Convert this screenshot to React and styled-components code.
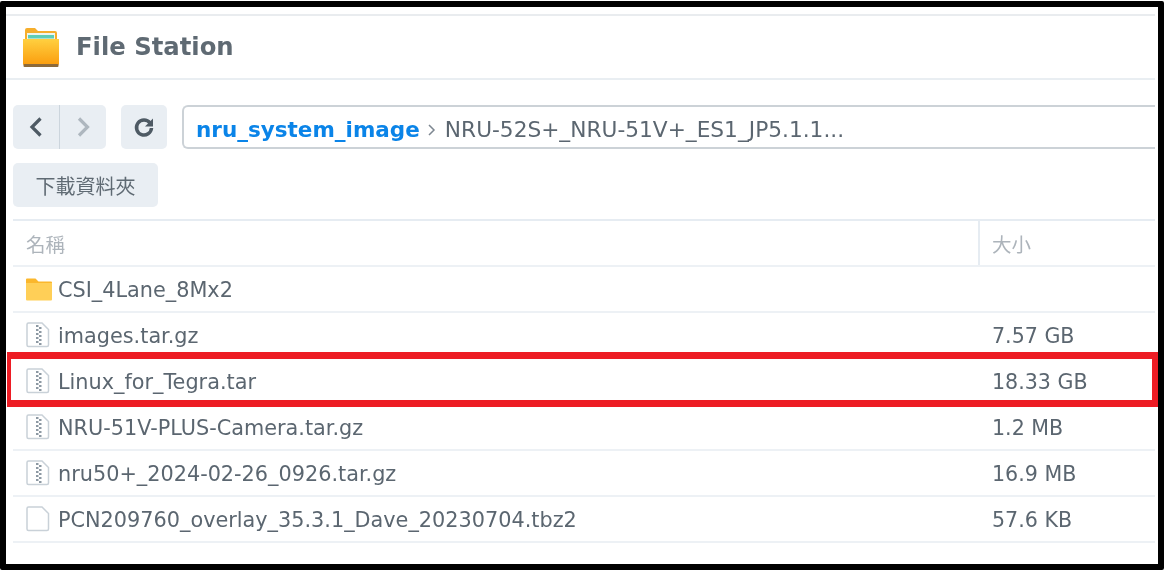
import React from 'react';
import styled, { createGlobalStyle } from 'styled-components';

const GlobalStyle = createGlobalStyle`
	html, body { margin: 0; padding: 0; background: #fff; }
	* { box-sizing: border-box; }
`

const Frame = styled.div`
	position: relative;
	width: 1164px;
	height: 569px;
	margin: 1px 0 0 0;
	border: 6px solid #000;
	border-radius: 2px;
	background: #fff;
	padding: 7px 3px 0 0;
	font-family: "DejaVu Sans", "Noto Sans CJK TC", sans-serif;
	color: #5b6670;
	filter: blur(0.4px);
`

const Header = styled.div`
	display: flex;
	align-items: center;
	height: 66px;
	border-top: 2px solid #e9ecef;
	border-bottom: 2px solid #e9eef2;
	padding-left: 17px;
	gap: 17px;
`

const Title = styled.div`
	font-size: 24.300px;
	font-weight: 700;
	color: #5f6a73;
	margin-bottom: 2px;
`

const Body = styled.div`
	padding: 25px 0 0 7px;
`

const Toolbar = styled.div`
	display: flex;
	gap: 15px;
`

const ButtonGroup = styled.div`
	display: flex;
	height: 44px;
	border-radius: 5px;
	background: #e9eef3;
`

const NavButton = styled.div`
	width: ${props => props.$wide}px;
	display: flex;
	align-items: center;
	justify-content: center;
	& + & {
		border-left: 1px solid #ccd5dd;
	}
`

const PathBar = styled.div`
	flex: 1;
	height: 44px;
	display: flex;
	align-items: center;
	border: 2px solid #ccd2d7;
	border-right: none;
	border-radius: 6px 0 0 6px;
	padding: 5px 0 0 12px;
	font-size: 21.700px;
`

const PathRoot = styled.span`
	font-size: 21.500px;
	font-weight: 700;
	color: #0a84e8;
`

const PathChevron = styled.svg`
	margin: 0 8px 0 7px;
`

const PathRest = styled.span`
	color: #5b6670;
`

const ActionButton = styled.div`
	display: flex;
	align-items: center;
	justify-content: center;
	width: 145px;
	height: 44px;
	margin-top: 14px;
	border-radius: 5px;
	background: #e9eef3;
	font-size: 20px;
	color: #5f6a73;
`

const Table = styled.div`
	margin-top: 12px;
	border-top: 2px solid #e6ecf2;
`

const Row = styled.div`
	display: flex;
	align-items: center;
	height: 46px;
	border-bottom: 2px solid #edf1f5;
`

const NameCell = styled.div`
	flex: 1;
	height: 100%;
	display: flex;
	align-items: center;
	padding-left: 13px;
	font-size: 20.800px;
	white-space: nowrap;
`

const IconSlot = styled.div`
	display: flex;
	width: 32px;
	flex-shrink: 0;
`

const CellText = styled.span`
	padding-top: 2px;
`

const SizeCell = styled.div`
	width: 177px;
	height: 100%;
	display: flex;
	align-items: center;
	padding-left: 12px;
	font-size: 20.600px;
	border-left: ${props => props.$head ? '2px solid #e6ecf2' : '2px solid transparent'};
`

const HeadLabel = styled.span`
	font-size: 19.500px;
	color: #adb4bb;
`

const Highlight = styled.div`
	position: absolute;
	left: 1px;
	right: 0;
	top: 345px;
	height: 55px;
	border: 7px solid #ed1c24;
	border-left-width: 4px;
	border-right-width: 6px;
`

const files = [
	{ name: 'CSI_4Lane_8Mx2', size: '', type: 'folder' },
	{ name: 'images.tar.gz', size: '7.57 GB', type: 'zip' },
	{ name: 'Linux_for_Tegra.tar', size: '18.33 GB', type: 'zip' },
	{ name: 'NRU-51V-PLUS-Camera.tar.gz', size: '1.2 MB', type: 'zip' },
	{ name: 'nru50+_2024-02-26_0926.tar.gz', size: '16.9 MB', type: 'zip' },
	{ name: 'PCN209760_overlay_35.3.1_Dave_20230704.tbz2', size: '57.6 KB', type: 'file' }
];

const AppIcon = () => (
	<svg width="36" height="40" viewBox="0 0 36 40">
		<defs>
			<linearGradient id="fold" x1="0" y1="0" x2="0" y2="1">
				<stop offset="0" stopColor="#ffd040" />
				<stop offset="1" stopColor="#fb9d0e" />
			</linearGradient>
		</defs>
		<path d="M2 3a2 2 0 0 1 2-2h8l3 3h17a2 2 0 0 1 2 2v10H2z" fill="#f6ae2c" />
		<rect x="4" y="6" width="28" height="8" fill="#eef5ee" />
		<rect x="5" y="8" width="26" height="3.500" fill="#5fcdb6" />
		<path d="M0 12h36v25a1 1 0 0 1-1 1H1a1 1 0 0 1-1-1z" fill="url(#fold)" />
		<rect x="0.500" y="37" width="35" height="3" rx="1" fill="#8d6a3a" />
	</svg>
);

const FolderIcon = () => (
	<svg width="26" height="24" viewBox="0 0 26 24">
		<path d="M0 2.500a1 1 0 0 1 1-1h8.500l3 3H25a1 1 0 0 1 1 1V6H0z" fill="#fbb72c" />
		<path d="M0 6h26v16.500a1 1 0 0 1-1 1H1a1 1 0 0 1-1-1z" fill="#ffcf57" />
	</svg>
);

// zipper teeth run down the middle of the sheet
const teeth = [3, 7, 11, 15, 19];

const FileIcon = ({ zip }) => (
	<svg width="24" height="26" viewBox="0 0 24 26" fill="none">
		<path d="M2.500 1h13.500l6.500 6.500V23a1.500 1.500 0 0 1-1.500 1.500H2.500A1.500 1.500 0 0 1 1 23V2.500A1.500 1.500 0 0 1 2.500 1z" fill="#fff" stroke="#c9d1d8" strokeWidth="1.500" />
		{zip && teeth.map(y => (
			<g key={y} fill="#8d99a3">
				<rect x="10" y={y} width="2.500" height="2" />
				<rect x="13" y={y + 2} width="2.500" height="2" />
			</g>
		))}
	</svg>
);

const rowIcon = type => {
	if (type === 'folder') return <FolderIcon />;
	return <FileIcon zip={type === 'zip'} />;
};

const App = () => (
	<Frame>
		<GlobalStyle />
		<Header>
			<AppIcon />
			<Title>File Station</Title>
		</Header>
		<Body>
			<Toolbar>
				<ButtonGroup>
					<NavButton $wide={46}>
						<svg width="20" height="24" viewBox="0 0 20 24" fill="none">
							<path d="M14.500 3.500l-8.500 8.500 8.500 8.500" stroke="#4e5a64" strokeWidth="3.200" />
						</svg>
					</NavButton>
					<NavButton $wide={47}>
						<svg width="20" height="24" viewBox="0 0 20 24" fill="none">
							<path d="M6 3.500l8.500 8.500-8.500 8.500" stroke="#aeb7bf" strokeWidth="3.200" />
						</svg>
					</NavButton>
				</ButtonGroup>
				<ButtonGroup>
					<NavButton $wide={46}>
						<svg width="24" height="24" viewBox="0 0 24 24" fill="none">
							<path d="M18 8A7.500 7.500 0 1 0 19.500 13" stroke="#4e5a64" strokeWidth="3.500" />
							<path d="M21 3.500v8h-8z" fill="#4e5a64" />
						</svg>
					</NavButton>
				</ButtonGroup>
				<PathBar>
					<PathRoot>nru_system_image</PathRoot>
					<PathChevron width="10" height="14" viewBox="0 0 10 14" fill="none">
						<path d="M2 2l5 5-5 5" stroke="#7d8791" strokeWidth="1.500" />
					</PathChevron>
					<PathRest>NRU-52S+_NRU-51V+_ES1_JP5.1.1...</PathRest>
				</PathBar>
			</Toolbar>
			<ActionButton>下載資料夾</ActionButton>
			<Table>
				<Row>
					<NameCell><HeadLabel>名稱</HeadLabel></NameCell>
					<SizeCell $head><HeadLabel>大小</HeadLabel></SizeCell>
				</Row>
				{files.map(file => (
					<Row key={file.name}>
						<NameCell>
							<IconSlot>{rowIcon(file.type)}</IconSlot>
							<CellText>{file.name}</CellText>
						</NameCell>
						<SizeCell><CellText>{file.size}</CellText></SizeCell>
					</Row>
				))}
			</Table>
		</Body>
		<Highlight />
	</Frame>
);

export default App;
